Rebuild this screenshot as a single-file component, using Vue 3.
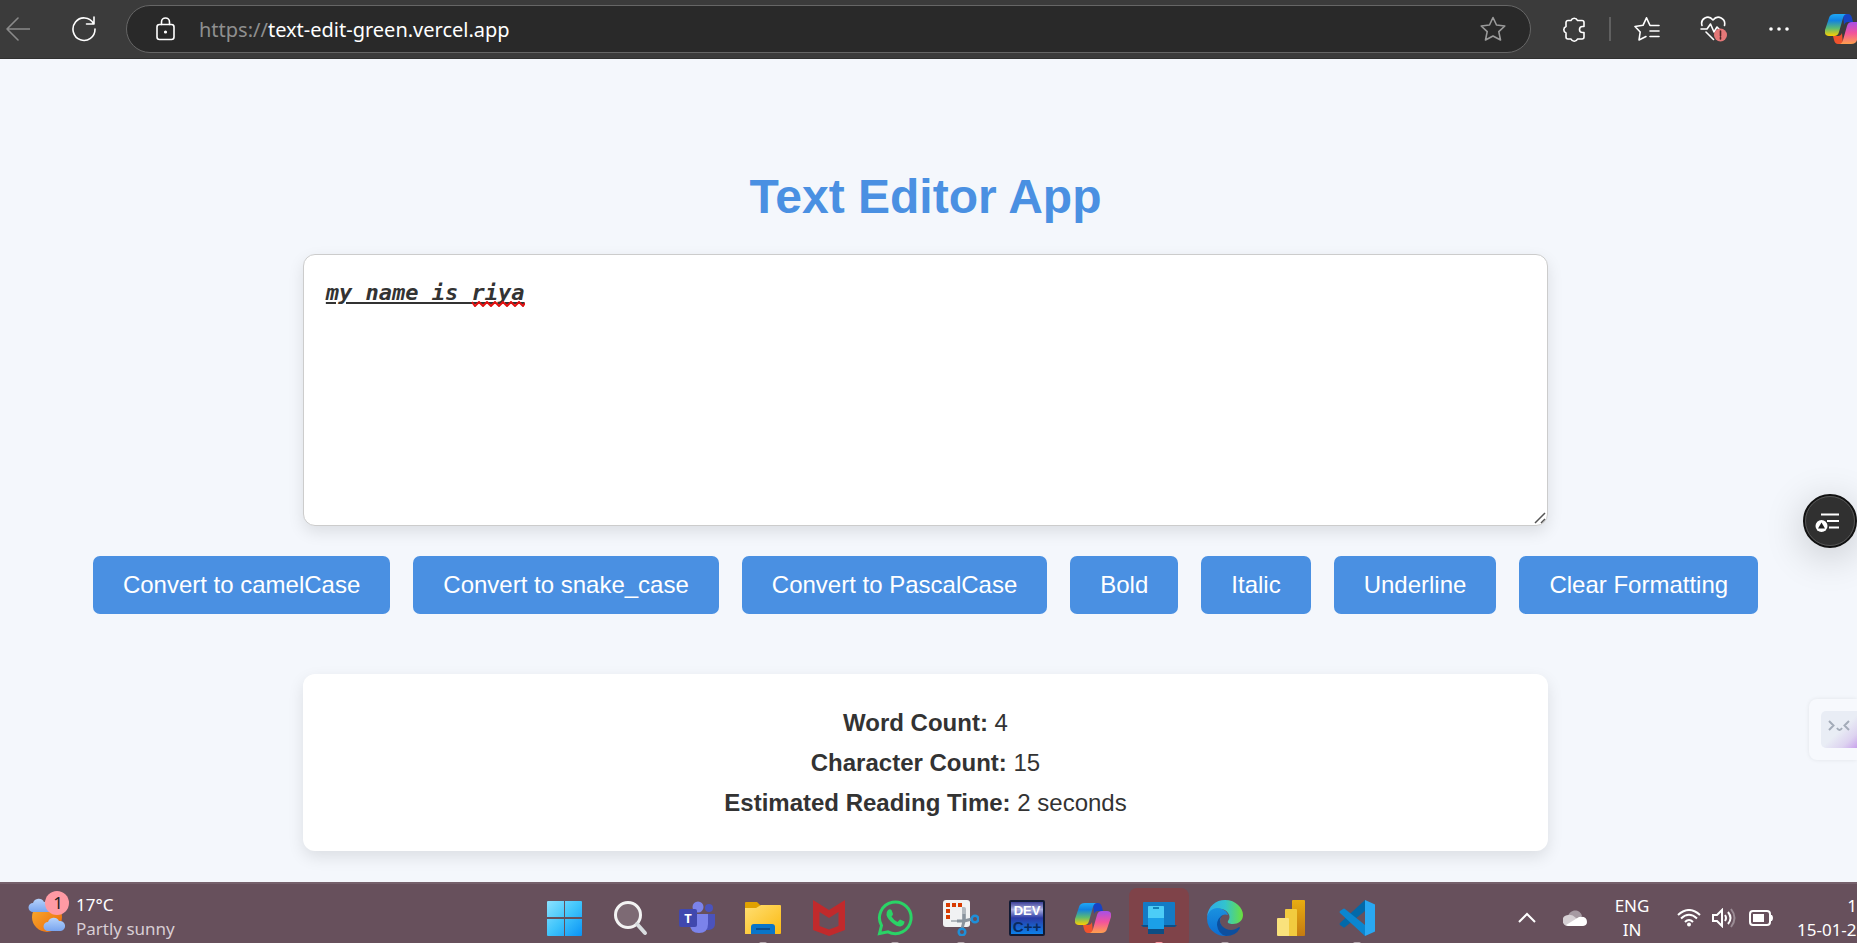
<script setup>
import { computed, reactive, ref } from "vue";

const text = ref("my name is riya");

const format = reactive({
  bold: true,
  italic: true,
  underline: true,
});

const words = computed(() => text.value.split(/\s+/).filter((w) => w !== ""));
const wordCount = computed(() => words.value.length);
const charCount = computed(() => text.value.length);
// 200 words per minute
const readingTime = computed(() => Math.ceil((wordCount.value / 200) * 60));

function capitalize(word) {
  return word.charAt(0).toUpperCase() + word.slice(1).toLowerCase();
}

function toPascalCase() {
  text.value = words.value.map(capitalize).join("");
}

function toCamelCase() {
  text.value = words.value
    .map((w, i) => (i === 0 ? w.toLowerCase() : capitalize(w)))
    .join("");
}

function toSnakeCase() {
  text.value = words.value.map((w) => w.toLowerCase()).join("_");
}

function clearFormatting() {
  format.bold = false;
  format.italic = false;
  format.underline = false;
}
</script>

<template>
  <div class="screen">
    <header class="toolbar">
      <button class="icon-btn back" aria-label="Back">
        <svg width="24" height="26" viewBox="0 0 24 26">
          <path d="M12 2 1 13l11 11M1 13h23" />
        </svg>
      </button>
      <button class="icon-btn reload" aria-label="Refresh">
        <svg width="26" height="26" viewBox="0 0 26 26">
          <path d="M22.500 7.500A11 11.300 0 1 0 24 13M23 1v7h-7.500" />
        </svg>
      </button>
      <div class="address">
        <svg class="lock" width="20" height="26" viewBox="0 0 20 26">
          <rect x="1" y="8.500" width="17" height="15" rx="2.500" />
          <path d="M5.500 8.500V6a4 4 0 0 1 8 0v2.500" />
          <circle cx="9.500" cy="16" r=".8" />
        </svg>
        <p class="url"><span>https://</span>text-edit-green.vercel.app</p>
        <button class="icon-btn star" aria-label="Add to favorites">
          <svg width="26" height="26" viewBox="0 0 26 26">
            <path d="m13 1.500 3.500 7.500 8.300 1-6 5.700 1.700 8.300L13 20l-7.500 4 1.700-8.300-6-5.700 8.300-1z" />
          </svg>
        </button>
      </div>
      <button class="icon-btn puzzle" aria-label="Extensions">
        <svg width="24" height="26" viewBox="0 0 24 26">
          <path
            d="M9 4.500a3.500 3.500 0 0 1 6.500 0H20a2 2 0 0 1 2 2v4h-1.500a3 3 0 0 0 0 6H22v4.500a2 2 0 0 1-2 2h-4.500a3.500 3.500 0 0 1-6.500 0H6a2 2 0 0 1-2-2v-4a3.500 3.500 0 0 1 0-6.500v-4a2 2 0 0 1 2-2z"
          />
        </svg>
      </button>
      <span class="divider"></span>
      <button class="icon-btn" aria-label="Favorites">
        <svg width="26" height="26" viewBox="0 0 26 26">
          <path d="M12 20.500 5 24l1.200-8L1 10.500 9 9.300l3.500-7.500L16 9.500h9M16 15h9M16 20.500h9" />
        </svg>
      </button>
      <button class="icon-btn heart" aria-label="Browser essentials">
        <svg width="28" height="28" viewBox="0 0 28 28">
          <path d="M2 10.500C0 4 8-1 13 5c5-6 13-1 11.500 5.500M1 14h6l3.500-5 3.500 8 3-5 2 2M6 17l7.500 7.500" />
          <circle class="alert" cx="20.500" cy="20" r="6.500" />
          <path class="alert-mark" d="M20.500 16v5M20.500 22.500v1.500" />
        </svg>
      </button>
      <button class="icon-btn more" aria-label="Settings and more">
        <svg width="24" height="24" viewBox="0 0 24 24">
          <circle cx="3" cy="12" r="1.800" />
          <circle cx="11" cy="12" r="1.800" />
          <circle cx="19" cy="12" r="1.800" />
        </svg>
      </button>
      <button class="icon-btn copilot" aria-label="Copilot">
        <svg width="36" height="36" viewBox="0 0 36 36">
          <use href="#copilot-logo" />
        </svg>
      </button>
    </header>

    <main class="page">
      <h1>Text Editor App</h1>

      <div class="editor">
        <textarea
          v-model="text"
          aria-label="Text"
          spellcheck="false"
          :class="{
            bold: format.bold,
            italic: format.italic,
            underline: format.underline,
          }"
        ></textarea>
        <svg
          v-if="text === 'my name is riya'"
          class="squiggle"
          width="54"
          height="6"
          viewBox="0 0 54 6"
        >
          <path d="M1 1l3 4 4-4 4 4 4-4 4 4 4-4 4 4 4-4 4 4 4-4 4 4 4-4 4 4 2-3" />
        </svg>
        <svg class="grip" width="12" height="12" viewBox="0 0 12 12">
          <path d="M1 11 11 1M7 11l4-4" />
        </svg>
      </div>

      <div class="actions">
        <button @click="toCamelCase">Convert to camelCase</button>
        <button @click="toSnakeCase">Convert to snake_case</button>
        <button @click="toPascalCase">Convert to PascalCase</button>
        <button @click="format.bold = !format.bold">Bold</button>
        <button @click="format.italic = !format.italic">Italic</button>
        <button @click="format.underline = !format.underline">Underline</button>
        <button @click="clearFormatting">Clear Formatting</button>
      </div>

      <section class="stats">
        <p><strong>Word Count:</strong> {{ wordCount }}</p>
        <p><strong>Character Count:</strong> {{ charCount }}</p>
        <p>
          <strong>Estimated Reading Time:</strong> {{ readingTime }} seconds
        </p>
      </section>

      <button class="reader" aria-label="Summarize">
        <svg width="54" height="54" viewBox="0 0 54 54">
          <circle cx="27" cy="27" r="26" fill="#303030" stroke="#111" stroke-width="2" />
          <circle cx="27" cy="27" r="24.500" fill="none" stroke="#555" />
          <path d="M18 20.500h18M24 27h12M26 33.500h10" stroke="#fff" stroke-width="2" />
          <circle cx="18.500" cy="32" r="6" fill="#fff" />
          <path d="m18.500 28.500 3.500 6h-7z" fill="#222" />
        </svg>
      </button>
      <button class="mascot" aria-label="Assistant">
        <svg width="36" height="37" viewBox="0 0 36 37">
          <defs>
            <linearGradient id="tile" x1="0" y1="0" x2="1" y2="1">
              <stop offset=".5" stop-color="#e9edf5" />
              <stop offset=".75" stop-color="#ddd3f0" />
              <stop offset=".95" stop-color="#c9a2ec" />
            </linearGradient>
          </defs>
          <rect width="40" height="37" rx="5" fill="url(#tile)" />
          <path
            d="m8 10 4.500 4.500L8 19M28 10l-4.500 4.500L28 19M16 17q2.500 4 5 0"
            fill="none"
            stroke="#a3abb8"
            stroke-width="2"
          />
        </svg>
      </button>
    </main>

    <footer class="taskbar">
      <div class="weather">
        <svg width="42" height="44" viewBox="0 0 42 44">
          <defs>
            <linearGradient id="sun" x1="0" y1="0" x2="1" y2="1">
              <stop offset="0" stop-color="#f9b233" />
              <stop offset="1" stop-color="#ec6608" />
            </linearGradient>
            <linearGradient id="cloud" x1="0" y1="0" x2="0" y2="1">
              <stop offset="0" stop-color="#b5d2fb" />
              <stop offset="1" stop-color="#79a5ef" />
            </linearGradient>
          </defs>
          <circle cx="19" cy="26" r="15" fill="url(#sun)" />
          <path d="M5 21a4.500 4.500 0 0 1 0-9 6 6 0 0 1 11-1 5 5 0 0 1 5 10z" fill="url(#cloud)" />
          <path d="M20 40a4.500 4.500 0 0 1 0-9 6 6 0 0 1 11-1 5 5 0 0 1 2 10z" fill="url(#cloud)" />
          <circle cx="29" cy="12" r="12" fill="#ff9aa4" />
          <text x="30" y="18" text-anchor="middle" fill="#222" font-size="17">1</text>
        </svg>
        <p>17°C<br /><span>Partly sunny</span></p>
      </div>

      <nav class="apps">
        <button aria-label="Start">
          <svg viewBox="0 0 36 36">
            <defs>
              <linearGradient id="win" x1="0" y1="0" x2="1" y2="1">
                <stop offset="0" stop-color="#8ce2ff" />
                <stop offset=".5" stop-color="#3fc4fb" />
                <stop offset="1" stop-color="#0a93f5" />
              </linearGradient>
            </defs>
            <path
              d="M1 1h16v16H0V2q0-1 1-1zM18 1h16q1 0 1 1v15H18zM0 19h17v17H1q-1 0-1-1zM18 19h17v16q0 1-1 1H18z"
              fill="url(#win)"
            />
          </svg>
        </button>
        <button aria-label="Search">
          <svg viewBox="0 0 36 36">
            <circle cx="15" cy="15" r="12.500" fill="#fff" fill-opacity=".15" stroke="#f3f3f3" stroke-width="3" />
            <path d="m24 24 8 9" stroke="#d9dde0" stroke-width="4" stroke-linecap="round" />
          </svg>
        </button>
        <button aria-label="Teams">
          <svg viewBox="0 0 36 36">
            <circle cx="30" cy="8" r="4" fill="#4b53bc" />
            <path d="M25 14h11v10q0 5-6 6h-5z" fill="#4b53bc" />
            <circle cx="19" cy="7" r="5.500" fill="#7b83eb" />
            <path d="M11 14h18v10q0 9-9 9t-9-9z" fill="#7b83eb" />
            <rect x="0" y="9" width="18" height="18" rx="2" fill="#4048ae" />
            <text x="9" y="23" text-anchor="middle" fill="#fff" font-size="13" font-weight="700">T</text>
          </svg>
        </button>
        <button class="running" aria-label="File Explorer">
          <svg viewBox="0 0 36 36">
            <defs>
              <linearGradient id="folder" x1="0" y1="0" x2="1" y2="1">
                <stop offset="0" stop-color="#ffdf73" />
                <stop offset="1" stop-color="#fbba12" />
              </linearGradient>
            </defs>
            <path d="M0 3q0-1 1-1h11l4 4-4 5H0z" fill="#e0a100" />
            <path d="M0 8h11l5-3h19q1 0 1 1v27q0 1-1 1H0z" fill="url(#folder)" />
            <path d="M6 34V27q0-3 3-3h18q3 0 3 3v7z" fill="#0a75c9" />
            <path d="M11 29h14" stroke="#0b4e8f" stroke-width="2" />
          </svg>
        </button>
        <button aria-label="McAfee">
          <svg viewBox="0 0 36 36">
            <path
              d="M2 0l16 10L34 0v30l-16 6-16-6zM8.500 12v14l9.500 3.500 9.500-3.500V12L18 18z"
              fill="#c12a2c"
              fill-rule="evenodd"
            />
          </svg>
        </button>
        <button class="running" aria-label="WhatsApp">
          <svg viewBox="0 0 36 36">
            <path
              d="M2.500 33.500 4.500 25.500A15.800 15.800 0 1 1 11 31.800z"
              fill="none"
              stroke="#2ad366"
              stroke-width="3"
            />
            <path
              d="M11 10q2-1.500 3.500 0l1.500 4q0 1-1.500 2.500 2.500 4 6 5.500l2.500-2.500 4.500 2q0 4-4 5-3 .500-8-3.500-5-4-6-8-.500-3 1.500-5z"
              fill="#2ad366"
            />
          </svg>
        </button>
        <button class="running" aria-label="Snipping Tool">
          <svg viewBox="0 0 36 36">
            <rect x="0" y="0" width="27" height="27" rx="3" fill="#f1f2f3" />
            <path d="M19 7h2q2 0 2 2v13H8v-2h11z" fill="#b3b9bf" />
            <path d="M3 5h4M9 5h4M15 5h4M3 11h4M3 17h4" stroke="#d83b01" stroke-width="4" />
            <path d="M14 21h7l8-2M21 14v7l-2 8" stroke="#8a949e" stroke-width="3" fill="none" />
            <circle cx="32" cy="19" r="3.300" fill="none" stroke="#1e8fd8" stroke-width="2.500" />
            <circle cx="19" cy="32" r="3.300" fill="none" stroke="#1e8fd8" stroke-width="2.500" />
          </svg>
        </button>
        <button aria-label="Dev-C++">
          <svg viewBox="0 0 36 36">
            <defs>
              <linearGradient id="dev" x1="0" y1="0" x2="0" y2="1">
                <stop offset="0" stop-color="#2b2f8c" />
                <stop offset=".25" stop-color="#aeb2e2" />
                <stop offset=".5" stop-color="#2a3aa5" />
                <stop offset="1" stop-color="#0a84ee" />
              </linearGradient>
            </defs>
            <rect x="1" y="1" width="34" height="34" rx="1" fill="url(#dev)" stroke="#111a33" stroke-width="2" />
            <text class="dev" x="18" y="32" text-anchor="middle" fill="#0a2a5e" font-size="15">C++</text>
            <text class="dev" x="18" y="15" text-anchor="middle" fill="#fff" font-size="13">DEV</text>
          </svg>
        </button>
        <button aria-label="Copilot">
          <svg viewBox="0 0 36 36">
            <defs>
              <linearGradient id="cop-a" x1="0" y1="0" x2="0" y2="1">
                <stop offset="0" stop-color="#1fa8f5" />
                <stop offset=".3" stop-color="#1282e0" />
                <stop offset=".65" stop-color="#5cba72" />
                <stop offset="1" stop-color="#ffd000" />
              </linearGradient>
              <linearGradient id="cop-b" x1="0" y1="0" x2="0" y2="1">
                <stop offset="0" stop-color="#a650e8" />
                <stop offset=".5" stop-color="#f2539c" />
                <stop offset="1" stop-color="#ffa04d" />
              </linearGradient>
              <g id="copilot-logo">
                <path d="M18 3h5q3 0 4 4l1 4h-5q-3 0-4 3z" fill="#1743c4" />
                <path d="M18 33h-5q-3 0-4-4l-1-4h5q3 0 4-3z" fill="#f0532d" />
                <path d="M10 3h12q-3 0-4 4l-4 14q-1 4-5 4H4q-5 0-4-6l4-12q1-4 6-4z" fill="url(#cop-a)" />
                <path d="M26 33H14q3 0 4-4l4-14q1-4 5-4h5q5 0 4 6l-4 12q-1 4-6 4z" fill="url(#cop-b)" />
              </g>
            </defs>
            <use href="#copilot-logo" />
          </svg>
        </button>
        <button class="running active" aria-label="Phone Link">
          <svg viewBox="0 0 36 36">
            <rect x="2" y="2" width="32" height="24" rx="1" fill="#147bc5" />
            <path d="M0 25h36l-2 2H2z" fill="#0b4f88" />
            <path d="M7 7q0-1 1-1h14q1 0 1 1v27H7z" fill="#1ba0e8" />
            <path d="M7 7q0-1 1-1h14q1 0 1 1v11H7z" fill="#4ccdf7" />
            <path d="M7 29h16v5H7z" fill="#0d4d83" />
            <path d="M12 8h6" stroke="#1382b8" stroke-width="2" />
          </svg>
        </button>
        <button class="running" aria-label="Edge">
          <svg viewBox="0 0 36 36">
            <defs>
              <linearGradient id="edge-a" x1="0" y1="0" x2="1" y2="0">
                <stop offset="0" stop-color="#2ea9ea" />
                <stop offset=".5" stop-color="#32c3cf" />
                <stop offset="1" stop-color="#6be13c" />
              </linearGradient>
              <linearGradient id="edge-b" x1="0" y1="0" x2="0" y2="1">
                <stop offset="0" stop-color="#1a92e0" />
                <stop offset="1" stop-color="#0c6dd2" />
              </linearGradient>
            </defs>
            <path d="M0 17C1 6 9 0 18 0c11 0 18 8 18 15 0 6-5 9-10 9-4 0-6-1-5-3q3-4 0-8C16 6 4 8 0 17z" fill="url(#edge-a)" />
            <path d="M0 18C1 9 9 6 15 9q5 2 6 6-8-2-8 6c0 9 8 14 15 11-6 5-14 5-20 1Q0 28 0 18z" fill="url(#edge-b)" />
            <path d="M16 15q-6 5-1 11c5 5 12 5 17 1q1 0 1 1-4 8-14 8-8-2-9-11 0-7 6-10z" fill="#0c4f9f" />
          </svg>
        </button>
        <button aria-label="Power BI">
          <svg viewBox="0 0 36 36">
            <defs>
              <linearGradient id="bi" x1="0" y1="0" x2="0" y2="1">
                <stop offset="0" stop-color="#e8ad12" />
                <stop offset="1" stop-color="#c57b10" />
              </linearGradient>
            </defs>
            <rect x="19" y="0" width="13" height="36" rx="1" fill="url(#bi)" />
            <path d="M12 10q0-1 1-1h10q1 0 1 1v26H12z" fill="#f2cb3f" />
            <path d="M4 19q0-1 1-1h10q1 0 1 1v17H5q-1 0-1-1z" fill="#f9e27c" />
          </svg>
        </button>
        <button class="running" aria-label="Visual Studio Code">
          <svg viewBox="0 0 36 36">
            <path d="M26 0v11L6 27q-1 1-2 0l-3-2q-1-1 0-2z" fill="#0269a9" />
            <path d="M26 36V25L6 9q-1-1-2 0l-3 2q-1 1 0 2z" fill="#0a86d0" />
            <path d="m26 0 9 4q1 0 1 1v26q0 1-1 1l-9 4z" fill="#29a8f2" />
          </svg>
        </button>
      </nav>

      <div class="tray">
        <button class="chevron" aria-label="Show hidden icons">
          <svg width="18" height="12" viewBox="0 0 18 12">
            <path d="m1 10 8-8 8 8" fill="none" stroke="#fff" stroke-width="2" />
          </svg>
        </button>
        <svg class="onedrive" width="24" height="16" viewBox="0 0 24 16">
          <path d="M5 7C6-1 17-2 19 6l-7 6z" fill="#a69aa2" />
          <path d="M5 16a5 5 0 0 1 0-11q4-1 8 3l9 6q-1 2-3 2z" fill="#d6d0d4" />
          <path d="m3 15 13-8q8-1 8 5 0 4-5 4H5z" fill="#fff" />
        </svg>
        <p class="lang">ENG<br />IN</p>
        <svg class="wifi" width="24" height="18" viewBox="0 0 24 18">
          <path
            d="M1 6Q12-4 23 6M4 9.500Q12 2 20 9.500M8 13Q12 9 16 13"
            fill="none"
            stroke="#fff"
            stroke-width="2"
          />
          <circle cx="12" cy="15.500" r="2" fill="#fff" />
        </svg>
        <svg class="volume" width="26" height="20" viewBox="0 0 26 20">
          <path
            d="M1 7h4l5-5v16l-5-5H1zM13 7q2 3 0 6M16 4q5 6 0 12"
            fill="none"
            stroke="#fff"
            stroke-width="2"
          />
          <path d="M19 1q7 9 0 18" fill="none" stroke="#9a8b94" stroke-width="2" />
        </svg>
        <svg class="battery" width="26" height="16" viewBox="0 0 26 16">
          <rect x="1" y="1" width="20" height="14" rx="3" fill="none" stroke="#fff" stroke-width="2" />
          <path d="M4 4h11v8H4zM22 5h1q2 3 0 6h-1z" fill="#fff" />
        </svg>
        <p class="clock"><span>1</span>15-01-2</p>
      </div>
    </footer>
  </div>
</template>

<style>
body {
  margin: 0;
}
</style>

<style scoped>
.screen {
  display: flex;
  flex-direction: column;
  min-height: 100vh;
  overflow: hidden;
  font-family: "Liberation Sans", Arial, sans-serif;
  color: #333;
  background: #f4f7fc;
}

p,
h1 {
  margin: 0;
}

button {
  padding: 0;
  border: 0;
  background: none;
  font-family: inherit;
  cursor: pointer;
}

svg {
  display: block;
  flex-shrink: 0;
}

/* browser toolbar */
.toolbar {
  display: flex;
  align-items: center;
  box-sizing: border-box;
  height: 59px;
  padding-left: 6px;
  overflow: hidden;
  background: #3b3b3b;
  border-bottom: 1px solid #303030;
}

.icon-btn {
  flex-shrink: 0;
}

.icon-btn svg,
.lock {
  fill: none;
  stroke: #fff;
  stroke-width: 1.6;
  stroke-linecap: round;
  stroke-linejoin: round;
}

.icon-btn.back svg {
  stroke: #8a8a8a;
}

.reload {
  margin: 0 29px 0 41px;
}

.address {
  display: flex;
  flex: 1;
  align-items: center;
  box-sizing: border-box;
  height: 48px;
  padding: 0 24px 0 29px;
  border: 1px solid #666;
  border-radius: 24px;
  background: #292929;
}

.url {
  flex: 1;
  margin-left: 23px;
  color: #fff;
  font-family: "Noto Sans", sans-serif;
  font-size: 20px;
}

.url span {
  color: #8f8f8f;
}

.icon-btn.star svg {
  stroke: #9a9a9a;
}

.puzzle {
  margin-left: 31px;
}

.divider {
  width: 2px;
  height: 24px;
  margin: 0 23px;
  background: #606060;
}

.heart {
  margin-left: 40px;
}

.icon-btn .alert {
  fill: #e57878;
  stroke: none;
}

.icon-btn .alert-mark {
  stroke: #4a2626;
}

.more {
  margin-left: 40px;
}

.icon-btn.more svg,
.icon-btn.copilot svg {
  fill: #fff;
  stroke: none;
}

.copilot {
  width: 32px;
  margin-left: 33px;
}

/* editor page */
.page {
  position: relative;
  display: flex;
  flex: 1;
  flex-direction: column;
  align-items: center;
  padding: 110px 42px 31px 36px;
}

h1 {
  margin-bottom: 29px;
  color: #4a90e2;
  font-size: 48px;
  line-height: 56px;
}

.editor {
  position: relative;
  width: 70%;
}

textarea {
  display: block;
  box-sizing: border-box;
  width: 100%;
  height: 272px;
  padding: 22px;
  border: 1px solid #ccc;
  border-radius: 12px;
  outline: 0;
  background: #fff;
  box-shadow: 0 6px 16px rgba(0, 0, 0, 0.1);
  color: #333;
  font-family: "DejaVu Sans Mono", monospace;
  font-size: 22px;
  line-height: 32px;
  resize: none;
}

.bold {
  font-weight: bold;
}

.italic {
  font-style: italic;
}

.underline {
  text-decoration: underline;
}

.squiggle {
  position: absolute;
  top: 47px;
  left: 168px;
  fill: none;
  stroke: #e01010;
  stroke-width: 2;
  pointer-events: none;
}

.grip {
  position: absolute;
  right: 2px;
  bottom: 2px;
  fill: none;
  stroke: #555;
  stroke-width: 1.5;
  pointer-events: none;
}

.actions {
  display: flex;
  flex-wrap: wrap;
  justify-content: center;
  gap: 23px;
  margin: 30px 0 60px;
}

.actions button {
  height: 58px;
  padding: 0 30px;
  border-radius: 7px;
  background: #4a90e2;
  color: #fff;
  font-size: 24px;
}

.stats {
  box-sizing: border-box;
  width: 70%;
  padding: 29px 20px 28px;
  border-radius: 12px;
  background: #fff;
  box-shadow: 0 6px 16px rgba(0, 0, 0, 0.1);
  font-size: 24px;
  line-height: 40px;
  text-align: center;
}

.reader {
  position: absolute;
  top: 435px;
  right: 0;
  border-radius: 50%;
  box-shadow: 0 8px 40px rgba(0, 0, 0, 0.2);
}

.mascot {
  position: absolute;
  top: 640px;
  right: 0;
  padding: 12px 0 12px 12px;
  border-radius: 8px 0 0 8px;
  background: #f7f9fd;
  box-shadow: 0 0 4px rgba(0, 0, 0, 0.08);
}

/* taskbar */
.taskbar {
  display: flex;
  box-sizing: border-box;
  height: 61px;
  overflow: hidden;
  border-top: 2px solid #75606b;
  background: #67505c;
  color: #fff;
  font-family: "Noto Sans", sans-serif;
  font-size: 17px;
  line-height: 24px;
}

.weather {
  display: flex;
  gap: 6px;
  box-sizing: border-box;
  width: 535px;
  padding: 7px 0 0 28px;
}

.weather p {
  padding-top: 2px;
}

.weather span {
  color: #d8ced4;
}

.apps {
  display: flex;
  gap: 6px;
}

.apps button {
  position: relative;
  display: flex;
  justify-content: center;
  width: 60px;
  height: 60px;
  margin-top: 4px;
  padding-top: 12px;
  border-radius: 8px;
}

.apps svg {
  width: 36px;
  height: 36px;
}

.dev {
  font-family: "Liberation Sans", sans-serif;
  font-weight: bold;
}

.apps .active {
  background: #7f4349;
}

.running::after {
  position: absolute;
  bottom: 4px;
  width: 8px;
  height: 2px;
  border-radius: 2px 2px 0 0;
  background: #b5a9af;
  content: "";
}

.active::after {
  background: #ff9aa4;
}

.tray {
  display: flex;
  flex: 1;
  align-items: center;
  justify-content: flex-end;
  padding-top: 8px;
}

.onedrive {
  margin-left: 27px;
}

.lang {
  width: 40px;
  margin: 0 25px;
  text-align: center;
}

.volume {
  margin: 0 11px;
}

.clock {
  width: 60px;
  margin-left: 22px;
  overflow: hidden;
  white-space: nowrap;
}

.clock span {
  display: block;
  text-align: right;
}
</style>
